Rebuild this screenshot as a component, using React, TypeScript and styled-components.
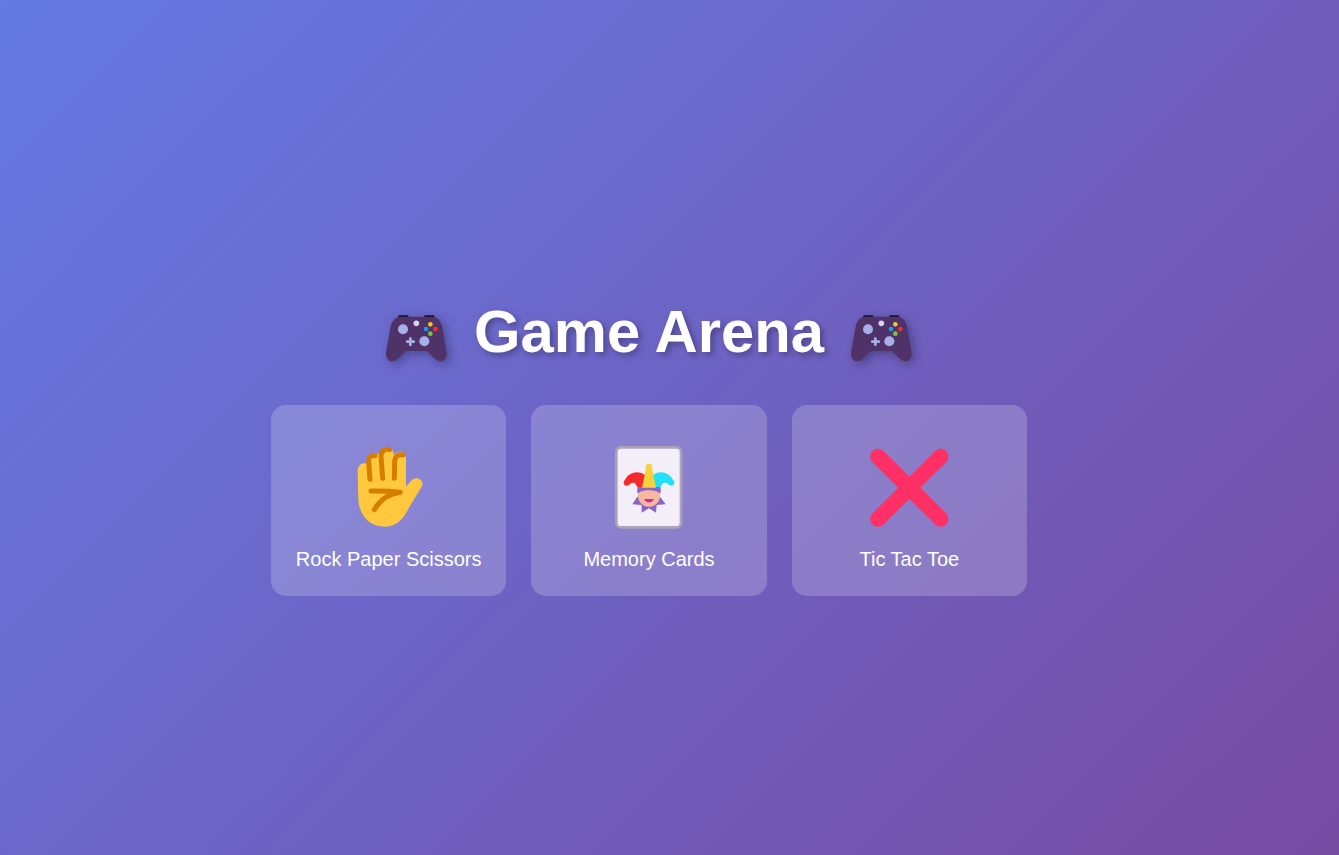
import React from 'react'
import styled, { createGlobalStyle } from 'styled-components'

const GlobalStyle = createGlobalStyle`
  html, body {
    margin: 0;
    padding: 0;
  }
  body {
    font-family: "Liberation Sans", Arial, sans-serif;
  }
`

const Page = styled.div`
  box-sizing: border-box;
  min-height: 100vh;
  padding: 38px 41px 0 0;
  display: flex;
  flex-direction: column;
  align-items: center;
  justify-content: center;
  background: linear-gradient(135deg, #657ae4 0%, #764ba2 100%);
`

const Title = styled.h1`
  margin: 0 0 39px;
  display: flex;
  align-items: center;
  gap: 27px;
  color: #fff;
  font-size: 59.8px;
  line-height: 69px;
  font-weight: 700;
  text-shadow: 3px 3px 6px rgba(0, 0, 0, 0.3);
`

const Pad = styled.svg`
  display: block;
  width: 61px;
  height: 48px;
  margin-top: 12px;
  filter: drop-shadow(3px 3px 5px rgba(0, 0, 0, 0.3));
`

const Grid = styled.div`
  display: grid;
  grid-template-columns: repeat(3, 235.33px);
  gap: 25px;
`

const Card = styled.div`
  height: 191px;
  box-sizing: border-box;
  padding-top: 30px;
  display: flex;
  flex-direction: column;
  align-items: center;
  border-radius: 15px;
  background: rgba(255, 255, 255, 0.2);
`

const Icon = styled.svg`
  display: block;
  width: 100px;
  height: 100px;
`

const Label = styled.div`
  margin-top: 13px;
  color: #fff;
  font-size: 20px;
  line-height: 23px;
`

function GamePad() {
  return (
    <Pad viewBox="30 55 183 144">
      <rect x="66" y="59" width="32" height="10" rx="5" fill="#15101c" />
      <rect x="144" y="59" width="32" height="10" rx="5" fill="#15101c" />
      <path
        d="M74 63 L168 63 C184 63 193 74 198 92 L211 165 C215 185 205 198 192 197 C176 195 168 178 152 166 L90 166 C74 178 66 195 50 197 C37 198 27 185 31 165 L44 92 C49 74 58 63 74 63 Z"
        fill="#4e3268"
      />
      <circle cx="81" cy="101" r="15" fill="#a6b0e8" />
      <circle cx="121" cy="83" r="8.5" fill="#d6d3e4" />
      <circle cx="145" cy="137" r="15" fill="#a6b0e8" />
      <rect x="90" y="134" width="27" height="8" rx="3" fill="#a6b0e8" />
      <rect x="99" y="125" width="8" height="26" rx="3" fill="#a6b0e8" />
      <circle cx="163" cy="86" r="7" fill="#f5c52c" />
      <circle cx="150" cy="100" r="7" fill="#1e9be8" />
      <circle cx="178" cy="100" r="7" fill="#f03030" />
      <circle cx="163" cy="114" r="7" fill="#7cc52c" />
    </Pad>
  )
}

function Hand() {
  return (
    <Icon viewBox="-4 0 300 300">
      <path
        d="M52 108 C52 92 64 82 80 86 L82 68 C84 56 96 52 112 56 C116 56 118 56 119 54 C122 42 134 36 146 38 C156 40 160 50 160 60 C168 52 178 50 184 52 C192 54 197 62 197 72 L197 155 L214 136 C224 126 240 128 246 142 C248 150 244 156 241 160 L205 220 C190 250 170 275 135 275 C85 275 58 240 54 195 Z"
        fill="#ffc83d"
      />
      <g fill="none" stroke="#d67d00" strokeWidth="15" strokeLinecap="round" strokeLinejoin="round">
        <path d="M104 62 C92 60 85 66 85 78 L89 133" />
        <path d="M148 44 C132 40 122 50 122 64 L127 130" />
        <path d="M188 60 C172 56 163 66 163 82 L162 130" />
        <path d="M92 168 C120 168 155 168 180 172 C150 176 122 190 102 224" />
      </g>
    </Icon>
  )
}

function Joker() {
  return (
    <Icon viewBox="-3 0 300 300">
      <rect x="49" y="37" width="194" height="240" rx="14" fill="#f3eef8" stroke="#aba4b8" strokeWidth="8" />
      <path
        d="M112 185 L97 208 L125 210 L125 233 L147 220 L168 233 L170 210 L197 208 L180 185 Z"
        fill="#8a64c8"
      />
      <circle cx="147" cy="182" r="33" fill="#f8b8a0" />
      <path d="M113 176 C110 165 112 156 116 150 L178 150 C182 156 184 165 181 176 C170 162 124 162 113 176 Z" fill="#8a64c8" />
      <path d="M133 192 L161 192 C159 206 135 206 133 192 Z" fill="#d9259a" />
      <path d="M73 140 C82 112 114 102 138 122 L130 156 L111 156 C109 142 98 138 86 150 Z" fill="#f52a2a" />
      <path d="M221 140 C212 112 180 102 156 122 L164 156 L183 156 C185 142 196 138 208 150 Z" fill="#22e0f5" />
      <circle cx="80" cy="143" r="9" fill="#f52a2a" />
      <circle cx="214" cy="143" r="9" fill="#22e0f5" />
      <path d="M138 100 L156 100 L168 158 L126 158 Z" fill="#f9cf3a" />
      <circle cx="147" cy="96" r="10" fill="#f9cf3a" />
    </Icon>
  )
}

function Cross() {
  return (
    <Icon viewBox="-2 0 300 300">
      <g stroke="#ff3066" strokeWidth="47" strokeLinecap="round">
        <path d="M55 65 L243 252" />
        <path d="M243 65 L55 252" />
      </g>
    </Icon>
  )
}

const games = [
  { name: 'Rock Paper Scissors', icon: <Hand /> },
  { name: 'Memory Cards', icon: <Joker /> },
  { name: 'Tic Tac Toe', icon: <Cross /> },
]

export default function App() {
  return (
    <Page>
      <GlobalStyle />
      <Title>
        <GamePad />
        <span>Game Arena</span>
        <GamePad />
      </Title>
      <Grid>
        {games.map((game) => (
          <Card key={game.name}>
            {game.icon}
            <Label>{game.name}</Label>
          </Card>
        ))}
      </Grid>
    </Page>
  )
}
